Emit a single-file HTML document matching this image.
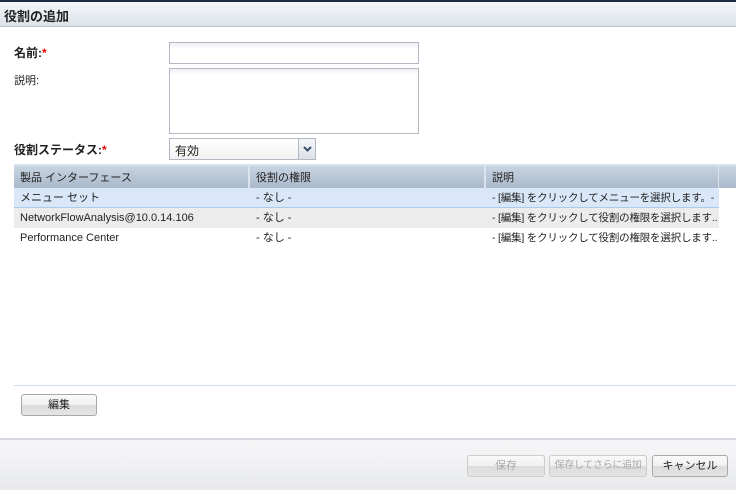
<!DOCTYPE html>
<html><head><meta charset="utf-8"><style>
*{box-sizing:border-box;margin:0;padding:0}
body{width:736px;height:490px;overflow:hidden;background:#fff;font-family:"Liberation Sans","Noto Sans CJK JP",sans-serif;font-size:11px;color:#222;position:relative}
.abs{position:absolute}
.title{left:0;top:0;width:736px;height:27px;border-top:2px solid #1c2a44;background:linear-gradient(#f4f6f8,#dde3ea);border-bottom:1px solid #b8c2cd;font-weight:bold;font-size:13px;padding:4px 0 0 4px}
.lbl{font-size:12px;font-weight:bold}
.req{color:#e00}
.inp{border:1px solid #b4b8c4;background:linear-gradient(#eef0f4,#fff 6px)}
.gh{left:14px;top:164px;width:722px;height:24px;border-top:2px solid #d6e2ee;background:linear-gradient(#c8d4e2,#a9b9cc)}
.cell{position:absolute;height:20px;line-height:20px;padding-left:6px;white-space:nowrap;overflow:hidden}
.btn{position:absolute;height:22px;border:1px solid #a8a8a8;border-radius:3px;background:linear-gradient(#fafafa 0,#f0f0f0 50%,#dcdcdc 50%,#e4e4e4);text-align:center;line-height:20px;font-size:11px;white-space:nowrap;overflow:hidden}
.dis{color:#aaa;border-color:#ccc}
.d{font-size:10.5px;letter-spacing:-0.2px;width:232px}
</style></head><body>
<div class="abs title">役割の追加</div>
<div class="abs lbl" style="left:14px;top:44px">名前:<span class="req">*</span></div>
<div class="abs" style="left:14px;top:72px;font-size:11px">説明:</div>
<div class="abs lbl" style="left:14px;top:141px">役割ステータス:<span class="req">*</span></div>
<div class="abs inp" style="left:169px;top:42px;width:250px;height:22px"></div>
<div class="abs inp" style="left:169px;top:68px;width:250px;height:66px"></div>
<div class="abs inp" style="left:169px;top:138px;width:147px;height:22px;background:linear-gradient(#fff,#f2f2f2)"><span style="position:absolute;left:5px;top:3px;font-size:12px">有効</span>
<div style="position:absolute;right:0;top:0;width:17px;height:20px;border-left:1px solid #b4b8c4;background:linear-gradient(#f4f6f8,#dde2e8)"><svg width="17" height="20"><path d="M5 8l3.5 3.5L12 8" stroke="#3a4e6a" stroke-width="2" fill="none"/></svg></div></div>
<div class="abs gh">
<div class="cell" style="left:0;top:2px">製品 インターフェース</div>
<div class="abs" style="left:234px;top:0;width:2px;height:22px;background:#dbe3ec"></div>
<div class="cell" style="left:236px;top:2px">役割の権限</div>
<div class="abs" style="left:470px;top:0;width:2px;height:22px;background:#dbe3ec"></div>
<div class="cell" style="left:472px;top:2px">説明</div>
<div class="abs" style="left:704px;top:0;width:1px;height:22px;background:#dbe3ec"></div>
</div>
<div class="abs" style="left:14px;top:188px;width:705px;height:20px;background:#d9e7f8;border-bottom:1px solid #aacbee"></div>
<div class="abs" style="left:14px;top:208px;width:705px;height:20px;background:#ececec"></div>
<div class="cell" style="left:14px;top:188px">メニュー セット</div>
<div class="cell" style="left:250px;top:188px">- なし -</div>
<div class="cell d" style="left:486px;top:188px">- [編集] をクリックしてメニューを選択します。-</div>
<div class="cell" style="left:14px;top:208px">NetworkFlowAnalysis@10.0.14.106</div>
<div class="cell" style="left:250px;top:208px">- なし -</div>
<div class="cell d" style="left:486px;top:208px">- [編集] をクリックして役割の権限を選択します...</div>
<div class="cell" style="left:14px;top:228px">Performance Center</div>
<div class="cell" style="left:250px;top:228px">- なし -</div>
<div class="cell d" style="left:486px;top:228px">- [編集] をクリックして役割の権限を選択します...</div>
<div class="abs" style="left:14px;top:385px;width:722px;height:1px;background:#d0dce8"></div>
<div class="btn" style="left:21px;top:394px;width:76px">編集</div>
<div class="abs" style="left:0;top:438px;width:736px;height:52px;border-top:2px solid #d4d9e0;background:linear-gradient(#f6f7f8,#e8e9eb)"></div>
<div class="btn dis" style="left:467px;top:455px;width:78px">保存</div>
<div class="btn dis" style="left:549px;top:455px;width:98px;font-size:10px;letter-spacing:-0.3px">保存してさらに追加</div>
<div class="btn" style="left:652px;top:455px;width:76px">キャンセル</div>
</body></html>
